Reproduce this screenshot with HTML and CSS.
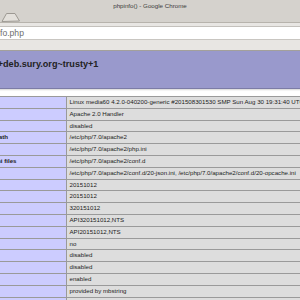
FILE: index.html
```html
<!DOCTYPE html>
<html lang="en">
<head>
  <meta charset="UTF-8">
  <title>phpinfo()</title>
  <link rel="stylesheet" href="styles.css">
</head>
<body>
  <!-- Window frame: title + tab strip -->
  <div class="frame">
    <div class="titlebar">phpinfo() - Google Chrome</div>
    <div class="tabstrip">
      <svg class="newtab" width="22" height="10" viewBox="0 0 22 10">
        <polygon points="2,9.5 6.5,1.5 15,1.5 19.5,9" fill="#e3e0db" stroke="#9d9993" stroke-width="1"/>
      </svg>
    </div>
  </div>

  <!-- Toolbar with the address bar -->
  <div class="toolbar">
    <div class="omnibox"><span class="host">localhost</span><span class="path">/phpinfo.php</span></div>
  </div>

  <!-- Page, scrolled a little to the right -->
  <div class="viewport">
    <div class="page">
      <div class="header">
        <h1>PHP Version 7.0.0-2+deb.sury.org~trusty+1</h1>
      </div>
      <table class="info">
        <tr><td class="e">System</td><td class="v">Linux media60 4.2.0-040200-generic #201508301530 SMP Sun Aug 30 19:31:40 UTC 2015 x86_64</td></tr>
        <tr><td class="e">Server API</td><td class="v">Apache 2.0 Handler</td></tr>
        <tr><td class="e">Virtual Directory Support</td><td class="v">disabled</td></tr>
        <tr><td class="e">Configuration File (php.ini) Path</td><td class="v">/etc/php/7.0/apache2</td></tr>
        <tr><td class="e">Loaded Configuration File</td><td class="v">/etc/php/7.0/apache2/php.ini</td></tr>
        <tr><td class="e">Scan this dir for additional .ini files</td><td class="v">/etc/php/7.0/apache2/conf.d</td></tr>
        <tr><td class="e">Additional .ini files parsed</td><td class="v">/etc/php/7.0/apache2/conf.d/20-json.ini, /etc/php/7.0/apache2/conf.d/20-opcache.ini</td></tr>
        <tr><td class="e">PHP API</td><td class="v">20151012</td></tr>
        <tr><td class="e">PHP Extension</td><td class="v">20151012</td></tr>
        <tr><td class="e">Zend Extension</td><td class="v">320151012</td></tr>
        <tr><td class="e">Zend Extension Build</td><td class="v">API320151012,NTS</td></tr>
        <tr><td class="e">PHP Extension Build</td><td class="v">API20151012,NTS</td></tr>
        <tr><td class="e">Debug Build</td><td class="v">no</td></tr>
        <tr><td class="e">Thread Safety</td><td class="v">disabled</td></tr>
        <tr><td class="e">Zend Signal Handling</td><td class="v">disabled</td></tr>
        <tr><td class="e">Zend Memory Manager</td><td class="v">enabled</td></tr>
        <tr><td class="e">Zend Multibyte Support</td><td class="v">provided by mbstring</td></tr>
        <tr><td class="e">IPv6 Support</td><td class="v">enabled</td></tr>
        <tr><td class="e">DTrace Support</td><td class="v">disabled</td></tr>
      </table>
    </div>
  </div>
</body>
</html>
```

FILE: styles.css
```css
* {
  box-sizing: border-box;
}
body {
  margin: 0;
  width: 300px;
  height: 300px;
  overflow: hidden;
  font-family: 'Liberation Sans', Arial, sans-serif;
  background: #fff;
}

/* window frame */
.frame {
  height: 23px;
  background: #d5d2cd;
  border-bottom: 1px solid #b7b3ac;
  display: flex;
  flex-direction: column;
}
.titlebar {
  height: 12px;
  line-height: 12px;
  font-size: 6.2px;
  color: #3c3c3c;
  text-align: center;
}
.tabstrip {
  height: 10px;
  display: flex;
  align-items: flex-end;
}
.newtab {
  display: block;
}

/* toolbar */
.toolbar {
  height: 28px;
  padding-top: 3px;
  background: #e8e6e3;
  border-bottom: 1px solid #a3a09b;
}
.omnibox {
  width: 400px;
  height: 14px;
  margin-left: -70px;
  padding-left: 12.7px;
  background: #fff;
  border-top: 1px solid #c4c1bc;
  border-bottom: 1px solid #c9c6c1;
  font-size: 8.6px;
  line-height: 12px;
  white-space: nowrap;
}
.host {
  color: #222;
}
.path {
  color: #6d6d6d;
}

/* page */
.viewport {
  height: 249px;
  overflow: hidden;
  background: #fff;
}
.page {
  width: 472px;
  margin-left: -89px;
  color: #222;
}
.header {
  height: 38px;
  background: #99c;
  border-bottom: 1px solid #7c7ca6;
  box-shadow: 0.5px 1px 1.5px #ccc;
}
.header h1 {
  margin: 0;
  padding-top: 8px;
  font-size: 9.1px;
  text-indent: 2px;
  white-space: nowrap;
}
.info {
  margin-top: 7px;
  width: 472px;
  table-layout: fixed;
  border-collapse: collapse;
  font-size: 6.15px;
  line-height: 6.8px;
  box-shadow: 0.5px 1px 1.5px #ccc;
}
.info td {
  border: 1px solid #9a9a9a;
  padding: 2px 2.5px;
  white-space: nowrap;
  vertical-align: baseline;
}
.e {
  width: 155px;
  background: #ccf;
  font-weight: bold;
}
.v {
  background: #ddd;
}
```
